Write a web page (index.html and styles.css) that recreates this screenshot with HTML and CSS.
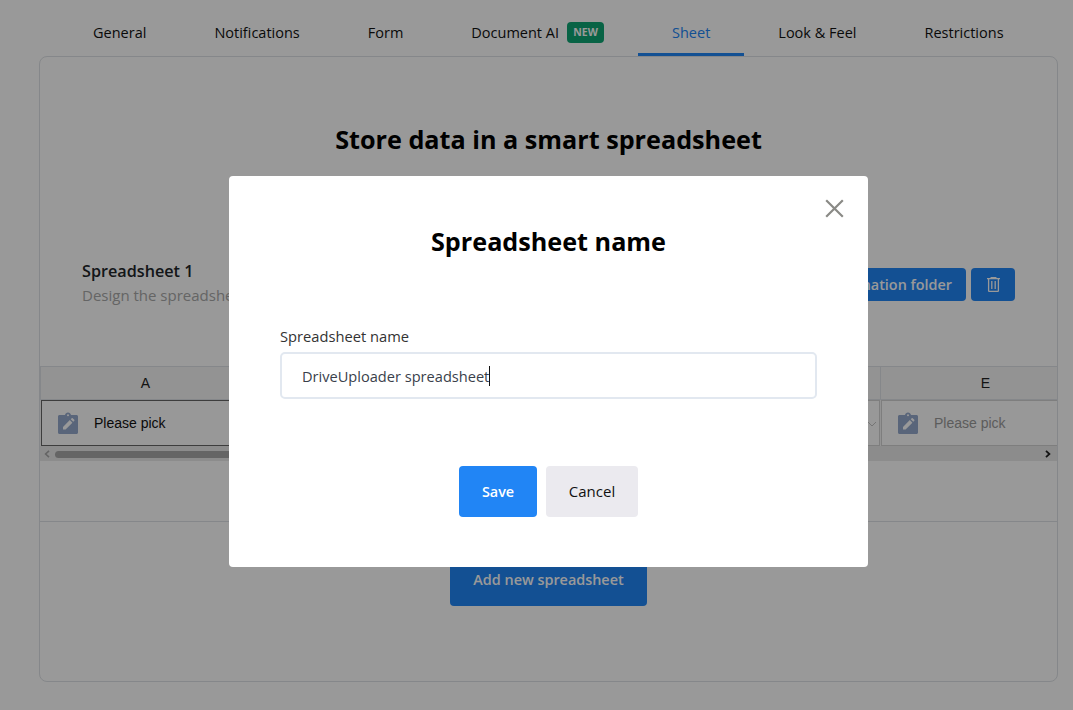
FILE: index.html
```html
<!DOCTYPE html>
<html lang="en">
<head>
    <meta charset="UTF-8">
    <meta name="viewport" content="width=device-width, initial-scale=1.0">
    <title>Sheet settings</title>
    <link rel="stylesheet" href="styles.css">
</head>
<body>
    <nav class="tabs">
        <a class="tab">General</a>
        <a class="tab">Notifications</a>
        <a class="tab">Form</a>
        <a class="tab">Document AI<span class="badge">NEW</span></a>
        <a class="tab active">Sheet</a>
        <a class="tab">Look &amp; Feel</a>
        <a class="tab">Restrictions</a>
    </nav>

    <main class="panel">
        <h2 class="panel-title">Store data in a smart spreadsheet</h2>

        <div class="sheet-head">
            <div class="sheet-info">
                <div class="sheet-name">Spreadsheet 1</div>
                <div class="sheet-desc">Design the spreadsheet columns below</div>
            </div>
            <div class="sheet-actions">
                <button class="btn-blue">Select destination folder</button>
                <button class="btn-blue btn-icon">
                    <svg width="13" height="15" viewBox="0 0 13 15" fill="none" stroke="currentColor" stroke-width="1.300">
                        <path d="M0 1.600h13M4.200 1.600V.6h4.600v1M1.600 1.600v12.100c0 .4.300.7.700.7h8.400c.4 0 .7-.3.7-.7V1.600M4.800 4v8M8.200 4v8"/>
                    </svg>
                </button>
            </div>
        </div>

        <div class="grid-wrap">
            <div class="grid">
                <div class="col-head">A</div>
                <div class="col-head">B</div>
                <div class="col-head">C</div>
                <div class="col-head">D</div>
                <div class="col-head">E</div>

                <div class="cell selected">
                    <svg class="pick-icon" viewBox="0 0 20 22"><use href="#clip"/></svg>
                    <span class="pick-dark">Please pick</span>
                </div>
                <div class="cell">
                    <svg class="pick-icon" viewBox="0 0 20 22"><use href="#clip"/></svg>
                    <span>Please pick</span>
                </div>
                <div class="cell">
                    <svg class="pick-icon" viewBox="0 0 20 22"><use href="#clip"/></svg>
                    <span>Please pick</span>
                </div>
                <div class="cell">
                    <svg class="pick-icon" viewBox="0 0 20 22"><use href="#clip"/></svg>
                    <span>Please pick</span>
                    <svg class="chev" width="10" height="6" viewBox="0 0 10 6" fill="none" stroke="#c4c4c4" stroke-width="1"><path d="M1 1l4 4 4-4"/></svg>
                </div>
                <div class="cell">
                    <svg class="pick-icon" viewBox="0 0 20 22"><use href="#clip"/></svg>
                    <span>Please pick</span>
                </div>
            </div>
            <div class="hscroll">
                <svg width="6" height="8" viewBox="0 0 6 8" fill="none" stroke="#a8a8a8" stroke-width="1.600"><path d="M5 .8L1.600 4 5 7.200"/></svg>
                <div class="thumb"></div>
                <svg width="6" height="8" viewBox="0 0 6 8" fill="none" stroke="#222" stroke-width="1.800"><path d="M1 .8L4.400 4 1 7.200"/></svg>
            </div>
        </div>

        <div class="add-row">
            <button class="btn-blue btn-add">Add new spreadsheet</button>
        </div>
    </main>

    <svg class="defs" width="0" height="0">
        <symbol id="clip" viewBox="0 0 20 22">
            <path fill="#94a8cc" d="M1.500 3H7C7.300 1.600 8.500.6 10 .6s2.700 1 3 2.400h5.500C19.300 3 20 3.700 20 4.500v16c0 .8-.7 1.500-1.500 1.500h-17C.7 22 0 21.300 0 20.500v-16C0 3.700.7 3 1.500 3z"/>
            <circle cx="10" cy="3.300" r="1" fill="white"/>
            <path fill="white" d="M5 17.500v-2.600l6.800-6.800 2.600 2.600-6.800 6.800zM12.700 7.200l1-1c.3-.3.7-.3 1 0l1.600 1.600c.3.3.3.7 0 1l-1 1z"/>
        </symbol>
    </svg>

    <div class="overlay">
        <div class="modal">
            <button class="close" aria-label="Close">
                <svg width="19" height="19" viewBox="0 0 19 19" stroke="#8a8a86" stroke-width="2.200" fill="none"><path d="M1.200 1.200l16.600 16.600M17.800 1.200L1.200 17.800"/></svg>
            </button>
            <h2 class="modal-title">Spreadsheet name</h2>
            <label class="field-label">Spreadsheet name</label>
            <div class="field">DriveUploader spreadsheet<span class="caret"></span></div>
            <div class="modal-actions">
                <button class="btn-save">Save</button>
                <button class="btn-cancel">Cancel</button>
            </div>
        </div>
    </div>
</body>
</html>
```

FILE: styles.css
```css
body {
    margin: 0;
    background: white;
    font-family: "Open Sans", "Noto Sans", sans-serif;
    color: #212529;
}

button {
    font-family: inherit;
    border: none;
}

/* tabs */
.tabs {
    display: flex;
    height: 56px;
    padding-left: 59px;
    box-sizing: border-box;
}

.tab {
    display: flex;
    align-items: center;
    padding: 18px 34px 7px;
    font-size: 14.500px;
    color: #111;
    white-space: pre;
    border-bottom: 3px solid transparent;
}

.tab.active {
    color: #2185f5;
    border-bottom-color: #2185f5;
}

.badge {
    margin-left: 8px;
    width: 37px;
    height: 21px;
    box-sizing: border-box;
    background: #0ea574;
    color: white;
    font-size: 10.500px;
    font-weight: 700;
    line-height: 20px;
    text-align: center;
    border-radius: 4px;
}

/* panel */
.panel {
    width: 1019px;
    height: 626px;
    margin-left: 39px;
    box-sizing: border-box;
    border: 1px solid #dee2e6;
    border-radius: 8px;
}

.panel-title {
    margin: 65px 0 103px;
    font-size: 25.200px;
    line-height: 34px;
    font-weight: 700;
    color: #000;
    text-align: center;
}

.sheet-head {
    display: flex;
    justify-content: space-between;
    height: 63px;
    margin-bottom: 44px;
    padding: 0 42px;
}

.sheet-name {
    font-size: 16.200px;
    font-weight: 600;
    line-height: 24px;
}

.sheet-desc {
    font-size: 15px;
    line-height: 24px;
    color: #a8a8a8;
}

.sheet-actions {
    display: flex;
    gap: 5px;
    padding-top: 9px;
    height: 33px;
}

.btn-blue {
    height: 33px;
    padding: 0 14px;
    background: #2185f5;
    color: white;
    font-size: 14.400px;
    font-weight: 600;
    border-radius: 4px;
}

.btn-icon {
    width: 44px;
    padding: 0;
    display: flex;
    align-items: center;
    justify-content: center;
}

/* spreadsheet columns */
.grid-wrap {
    height: 155px;
    border-bottom: 1px solid #dee2e6;
    overflow: hidden;
}

.grid {
    display: grid;
    grid-template-columns: repeat(5, 210px);
    grid-template-rows: 33px 46px;
    background: #f5f5f5;
    border-top: 1px solid #dee2e6;
}

.col-head {
    display: flex;
    align-items: center;
    justify-content: center;
    font-family: "Liberation Sans", Arial, sans-serif;
    font-size: 14px;
    color: #222;
    border-left: 1px solid #dee2e6;
    border-bottom: 1px solid #dee2e6;
}

.cell {
    position: relative;
    display: flex;
    align-items: center;
    gap: 16px;
    padding-left: 16px;
    background: #fdfdfd;
    font-family: "Liberation Sans", Arial, sans-serif;
    font-size: 14px;
    color: #9a9a9a;
    border: 1px solid #d3d3d3;
    margin-left: 1px;
    box-sizing: border-box;
}

.cell.selected {
    border-color: #666;
}

.pick-dark {
    color: #111;
}

.pick-icon {
    width: 20px;
    height: 22px;
}

.chev {
    position: absolute;
    right: 2px;
    top: 20px;
}

.hscroll {
    display: flex;
    align-items: center;
    gap: 5px;
    height: 15px;
    box-sizing: border-box;
    padding: 1px 6px 0 4px;
    background: #e9e9e9;
}

.thumb {
    flex: 1;
    height: 7px;
    background: #a8a8a8;
    border-radius: 4px;
    margin-right: 500px;
}

.add-row {
    display: flex;
    justify-content: center;
    padding-top: 33px;
}

.btn-add {
    width: 197px;
    height: 51px;
    padding-bottom: 2px;
}

.defs {
    position: absolute;
}

/* modal */
.overlay {
    position: fixed;
    top: 0;
    left: 0;
    right: 0;
    bottom: 0;
    padding: 176px 0 0 229px;
    background: rgba(0,0,0,0.4);
}

.modal {
    position: relative;
    width: 639px;
    height: 391px;
    box-sizing: border-box;
    padding: 48px 51px 0;
    background: white;
    border-radius: 4px;
}

.close {
    position: absolute;
    top: 23px;
    right: 24px;
    padding: 0;
    width: 19px;
    height: 19px;
    background: none;
}

.modal-title {
    margin: 0 0 68px;
    font-size: 25.200px;
    line-height: 34px;
    font-weight: 700;
    color: #000;
    text-align: center;
}

.field-label {
    display: block;
    font-size: 14.700px;
    line-height: 20px;
    margin-bottom: 6px;
    color: #333;
}

.field {
    display: flex;
    align-items: center;
    height: 47px;
    box-sizing: border-box;
    padding-left: 20px;
    border: 2px solid #e2e8f0;
    border-radius: 5px;
    font-size: 14.600px;
    color: #3a3f4b;
}

.caret {
    width: 1px;
    height: 20px;
    background: #111;
}

.modal-actions {
    display: flex;
    justify-content: center;
    gap: 9px;
    margin-top: 67px;
}

.btn-save,
.btn-cancel {
    height: 51px;
    padding: 0 0 1px;
    font-size: 14.400px;
    font-weight: 600;
    border-radius: 4px;
}

.btn-save {
    width: 78px;
    background: #2185f5;
    color: white;
}

.btn-cancel {
    width: 92px;
    background: #ebeaef;
    color: #111;
    font-size: 15px;
    font-weight: 500;
}
```
